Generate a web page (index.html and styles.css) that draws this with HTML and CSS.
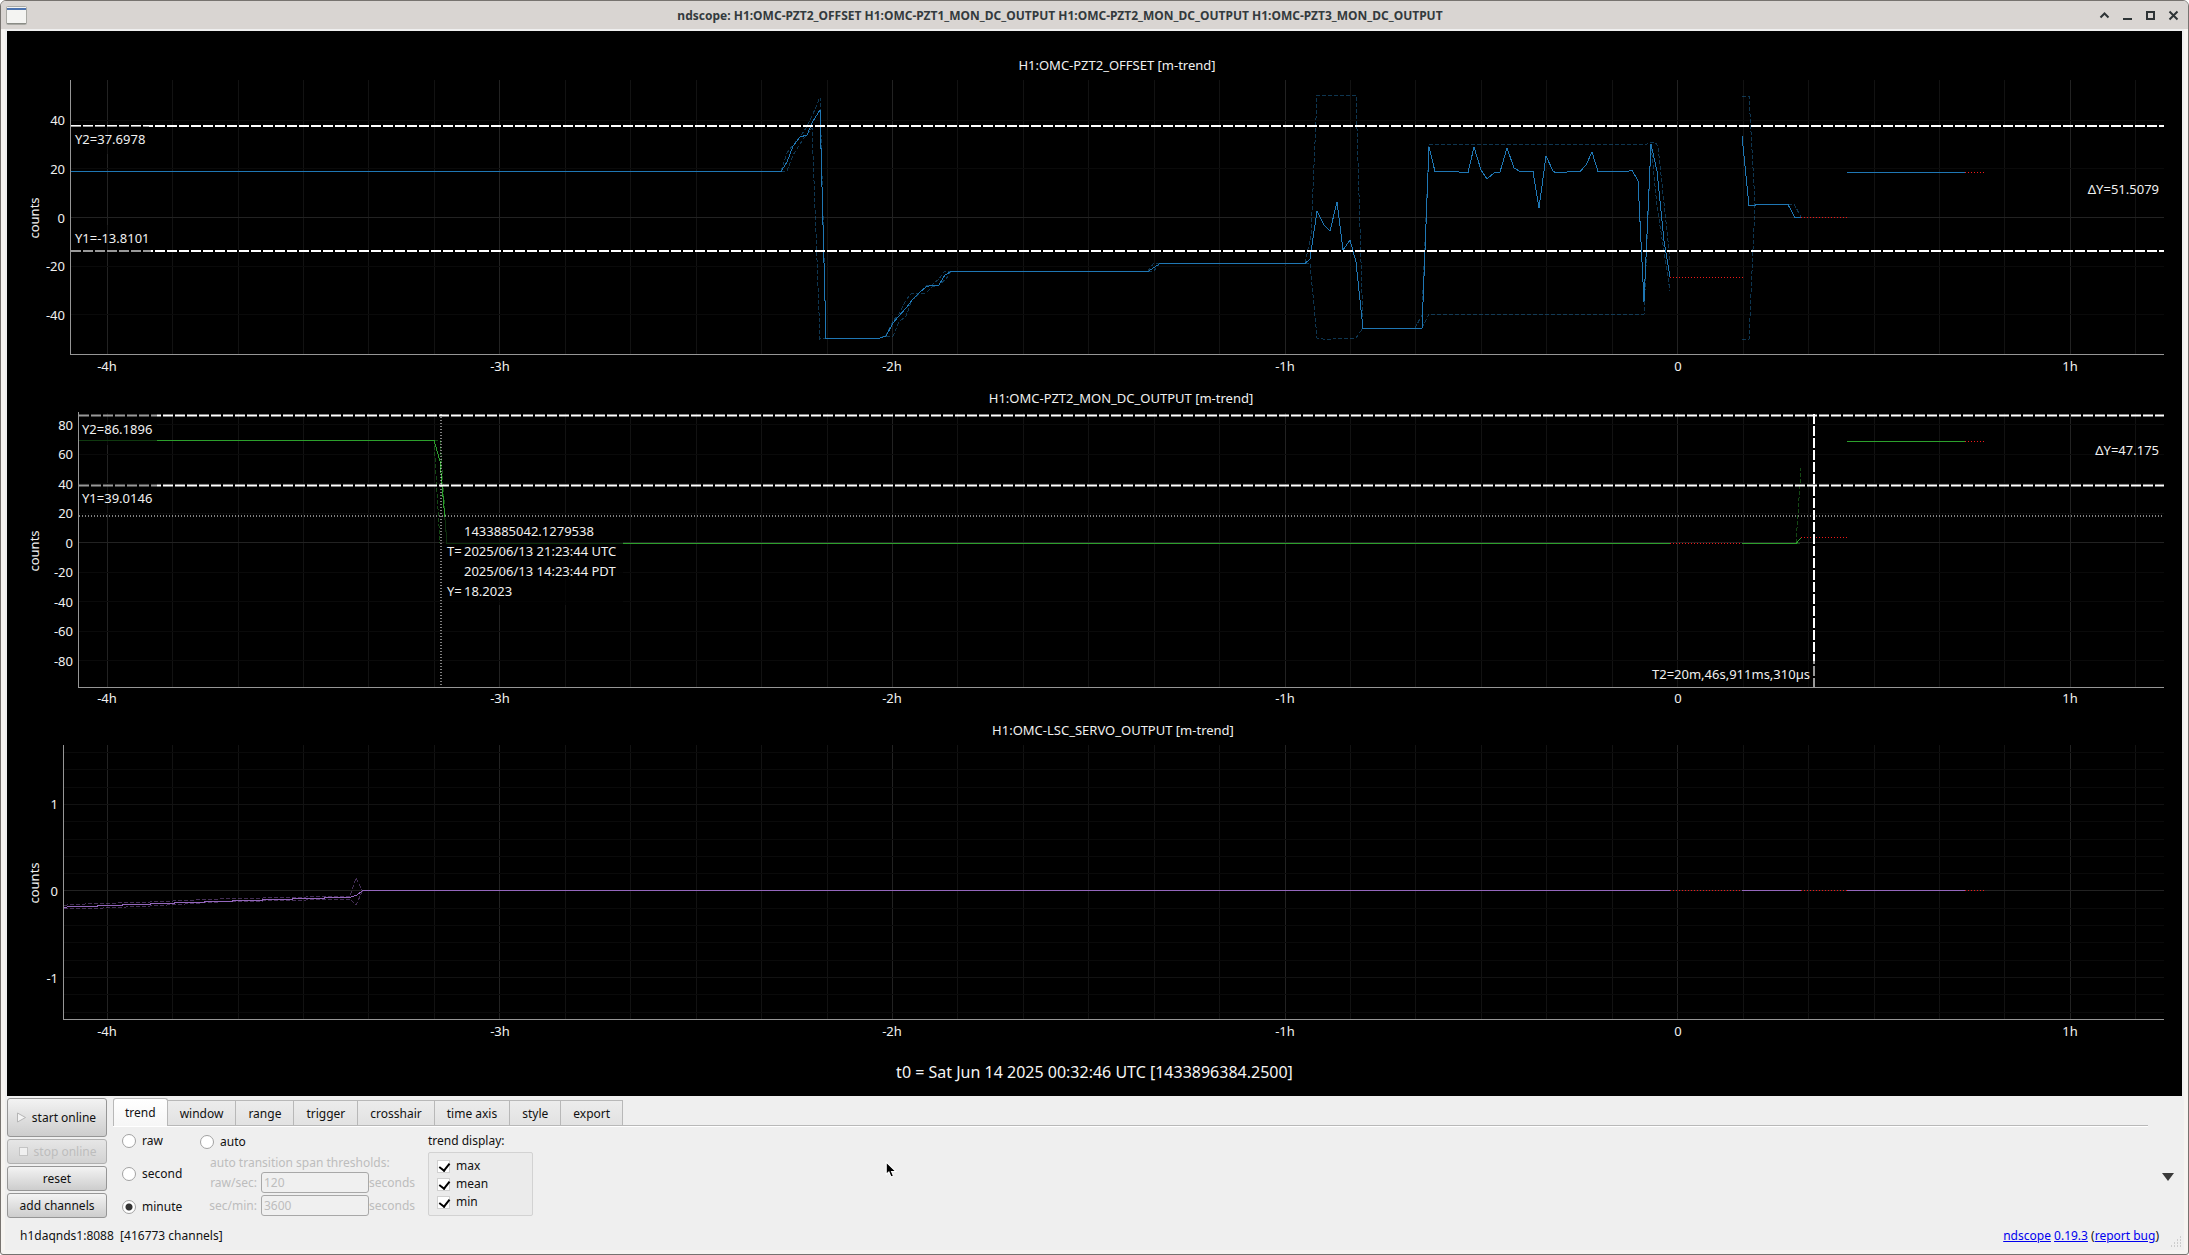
FILE: index.html
```
<!DOCTYPE html>
<html lang="en">
<head>
  <meta charset="utf-8" />
  <meta name="viewport" content="width=device-width, initial-scale=1" />
  <title>ndscope</title>
  <link rel="stylesheet" href="styles.css">
</head>
<body>

<div class="window">
  <header class="titlebar">
    <svg class="app-icon" width="21" height="19" viewBox="0 0 21 19" aria-hidden="true">
      <rect x="0.5" y="0.5" width="20" height="18" rx="1" fill="#f4f4f2" stroke="#a9a9a4" />
      <rect x="1" y="2" width="19" height="2" fill="#4d74b0" />
      <rect x="1" y="17" width="19" height="1" fill="#8a8c86" />
    </svg>
    <h1>ndscope: H1:OMC-PZT2_OFFSET H1:OMC-PZT1_MON_DC_OUTPUT H1:OMC-PZT2_MON_DC_OUTPUT H1:OMC-PZT3_MON_DC_OUTPUT</h1>
    <div class="window-buttons">
      <button type="button" aria-label="Roll up"><svg width="11" height="11" viewBox="0 0 11 11"><path d="M1.500 7.500L5.500 3.500L9.500 7.500" /></svg></button>
      <button type="button" aria-label="Minimize"><svg width="11" height="11" viewBox="0 0 11 11"><path d="M1 9H10" /></svg></button>
      <button type="button" aria-label="Maximize"><svg width="11" height="11" viewBox="0 0 11 11"><path d="M2 2H9V9H2Z" /></svg></button>
      <button type="button" aria-label="Close"><svg width="11" height="11" viewBox="0 0 11 11"><path d="M1.500 1.500L9.500 9.500M9.500 1.500L1.500 9.500" /></svg></button>
    </div>
  </header>

  <main class="plots">
    <!-- PZT2 offset -->
    <svg class="plot" viewBox="7 31 2175 352" role="img" aria-label="H1:OMC-PZT2_OFFSET trend">
      <defs>
        <path id="hours-minor" d="M172.500 80V354M238.500 80V354M303.500 80V354M368.500 80V354M434.500 80V354M565.500 80V354M630.500 80V354M696.500 80V354M761.500 80V354M827.500 80V354M957.500 80V354M1023.500 80V354M1088.500 80V354M1154.500 80V354M1219.500 80V354M1350.500 80V354M1415.500 80V354M1481.500 80V354M1546.500 80V354M1612.500 80V354M1743.500 80V354M1808.500 80V354M1874.500 80V354M1939.500 80V354M2004.500 80V354M2135.500 80V354" />
        <path id="hours" d="M107.500 80V354M499.500 80V354M892.500 80V354M1285.500 80V354M1677.500 80V354M2070.500 80V354" />
        <g id="hour-labels">
          <text x="107" y="371">-4h</text>
          <text x="500" y="371">-3h</text>
          <text x="892" y="371">-2h</text>
          <text x="1285" y="371">-1h</text>
          <text x="1678" y="371">0</text>
          <text x="2070" y="371">1h</text>
        </g>
      </defs>
      <text class="plot-title" x="1117" y="70">H1:OMC-PZT2_OFFSET [m-trend]</text>
      <text class="axis-name" transform="translate(39 218) rotate(-90)">counts</text>
      <use class="grid-minor" href="#hours-minor" />
      <use class="grid-major" href="#hours" />
      <path class="grid-faint" d="M71 120.500H2164M71 168.500H2164M71 266.500H2164M71 314.500H2164" />
      <path class="grid-major" d="M71 217.500H2164" />

      <g class="trace blue">
        <path class="band" d="M781 171L787 153L793 145L800 137L806 128L813 114L820 97L821 135L826 338M880 338L886 335L893 321L899 314L906 300L912 293H919L926 286L932 285L939 279L945 271H951M1148 271L1154 263H1160M1305 263L1311 236L1317 95H1356L1363 328M1415 328L1422 315L1429 144H1647L1649 142H1655L1658 146L1670 260M1742 96H1749L1755 204M1788 204H1794L1801 217" />
        <path class="band" d="M781 171H787L793 155L800 144L807 134L812 128L820 339L826 338M886 336H893L899 322L906 316L912 300L919 294L926 293L932 287L939 285L946 279L951 271M1148 271H1154L1160 263M1305 263H1310L1317 338L1323 339H1331L1334 338H1340L1344 339L1350 338H1356L1363 328M1422 328L1429 314H1644L1651 145L1657 206L1670 291M1742 339H1749L1755 204" />
        <path d="M71 171.500H781L787 162L793 146L800 137L807 135L813 121L820 110L826 338H880L886 336L893 323L899 316L906 308L913 299L919 293L926 287L932 285H939L945 275L951 271.500H1148L1160 263.500H1305L1310 259L1317 211L1324 225L1330 231L1337 202L1343 250L1350 240L1356 262L1363 328.500H1422L1429 147L1435 171.500H1458L1460 172.500H1468L1474 147L1481 170L1487 179L1494 173L1500 172L1507 148L1514 168L1520 171.500H1533L1539 208L1546 156L1553 171L1555 172.500H1566L1568 171.500H1580L1586 165L1592 152L1598 171.500H1628L1632 170L1638 181L1644 302L1651 144L1657 171L1664 241L1670 277M1742 136L1749 205.500H1755V204.500H1788L1795 217.500H1801M1847 172.500H1965" />
        <path class="gap" d="M1670 277.500H1743M1801 217.500H1847M1965 172.500H1984" />
      </g>

      <path class="cursor-line" d="M71 126H2164M71 251H2164" />
      <rect class="label-bg" x="71" y="126" width="78" height="28" />
      <rect class="label-bg" x="71" y="225" width="80" height="28" />
      <text x="75" y="144">Y2=37.6978</text>
      <text x="75" y="243">Y1=-13.8101</text>
      <text class="end" x="2159" y="194">ΔY=51.5079</text>

      <path class="axis" d="M70.500 80V354.500H2164" />
      <g class="end">
        <text x="65" y="125">40</text>
        <text x="65" y="174">20</text>
        <text x="65" y="223">0</text>
        <text x="65" y="271">-20</text>
        <text x="65" y="320">-40</text>
      </g>
      <use class="middle" href="#hour-labels" />
    </svg>

    <!-- PZT2 monitor -->
    <svg class="plot" viewBox="7 383 2175 333" role="img" aria-label="H1:OMC-PZT2_MON_DC_OUTPUT trend">
      <text class="plot-title" x="1121" y="403">H1:OMC-PZT2_MON_DC_OUTPUT [m-trend]</text>
      <text class="axis-name" transform="translate(39 551) rotate(-90)">counts</text>
      <use class="grid-minor" href="#hours-minor" y="333" />
      <use class="grid-major" href="#hours" y="333" />
      <path class="grid-faint" d="M79 424.500H2164M79 454.500H2164M79 483.500H2164M79 513.500H2164M79 572.500H2164M79 601.500H2164M79 631.500H2164M79 660.500H2164" />
      <path class="grid-major" d="M79 542.500H2164" />

      <g class="trace green">
        <path class="band" d="M434 440H440L447 543M434 440L440 543M1796 543L1801 468M1796 543.500H1801" />
        <path d="M79 440.500H434L440 461L447 543.500H1670M1742 543.500H1796L1801 538M1847 441.500H1965" />
        <path class="gap" d="M1670 543.500H1742M1801 537.500H1847M1965 441.500H1984" />
      </g>

      <rect class="label-bg" x="79" y="420" width="78" height="25" />
      <path class="crosshair" d="M79 516H2164M441 414V687" />
      <path class="cursor-line" d="M79 415.500H2164M79 485.500H2164M1814 414V687" />
      <rect class="label-bg" x="79" y="413" width="78" height="32" />
      <rect class="label-bg" x="79" y="483" width="78" height="31" />
      <rect class="label-bg" x="1648" y="661" width="167" height="27" />
      <rect class="label-bg dark" x="444" y="517" width="179" height="88" />
      <text x="82" y="434">Y2=86.1896</text>
      <text x="82" y="503">Y1=39.0146</text>
      <text class="end" x="2159" y="455">ΔY=47.175</text>
      <text class="end" x="1810" y="679">T2=20m,46s,911ms,310µs</text>
      <text x="464" y="536">1433885042.1279538</text>
      <text x="447" y="556">T=</text>
      <text x="464" y="556">2025/06/13 21:23:44 UTC</text>
      <text x="464" y="576">2025/06/13 14:23:44 PDT</text>
      <text x="447" y="596">Y=</text>
      <text x="464" y="596">18.2023</text>

      <path class="axis" d="M78.500 412V687.500H2164" />
      <g class="end">
        <text x="73" y="430">80</text>
        <text x="73" y="459">60</text>
        <text x="73" y="489">40</text>
        <text x="73" y="518">20</text>
        <text x="73" y="548">0</text>
        <text x="73" y="577">-20</text>
        <text x="73" y="607">-40</text>
        <text x="73" y="636">-60</text>
        <text x="73" y="666">-80</text>
      </g>
      <use class="middle" href="#hour-labels" y="332" />
    </svg>

    <!-- LSC servo -->
    <svg class="plot" viewBox="7 716 2175 332" role="img" aria-label="H1:OMC-LSC_SERVO_OUTPUT trend">
      <text class="plot-title" x="1113" y="735">H1:OMC-LSC_SERVO_OUTPUT [m-trend]</text>
      <text class="axis-name" transform="translate(39 883) rotate(-90)">counts</text>
      <use class="grid-minor" href="#hours-minor" y="665" />
      <use class="grid-major" href="#hours" y="665" />
      <path class="grid-faint" d="M64 752.500H2164M64 769.500H2164M64 787.500H2164M64 821.500H2164M64 839.500H2164M64 856.500H2164M64 873.500H2164M64 908.500H2164M64 925.500H2164M64 942.500H2164M64 960.500H2164M64 994.500H2164M64 1012.500H2164" />
      <path class="grid-minor" d="M64 804.500H2164M64 977.500H2164" />
      <path class="grid-major" d="M64 890.500H2164" />

      <g class="trace purple">
        <path class="band" d="M64 906L70 904H85L150 902L220 899L350 896L356 878L362 890" />
        <path class="band" d="M64 908L80 909L150 906L220 902L350 899L356 905L363 890" />
        <path d="M64 907.500L70 906.500H97V905.500H122V904.500H150V903.500H174V902.500H204V901.500H232V900.500H262V899.500H292V898.500H324V897.500H350L357 895L363 890.500H1670M1742 890.500H1801M1847 890.500H1965" />
        <path class="gap" d="M1670 890.500H1742M1801 890.500H1847M1965 890.500H1984" />
      </g>

      <path class="axis" d="M63.500 745V1019.500H2164" />
      <g class="end">
        <text x="58" y="809">1</text>
        <text x="58" y="896">0</text>
        <text x="58" y="983">-1</text>
      </g>
      <use class="middle" href="#hour-labels" y="665" />
    </svg>

    <p class="t0">t0 = Sat Jun 14 2025 00:32:46 UTC [1433896384.2500]</p>
  </main>

  <section class="controls">
    <div class="actions">
      <button type="button" class="start"><svg width="11" height="11" viewBox="0 0 11 11"><path d="M1.500 1L9.500 5.500L1.500 10Z" fill="#f4f4f4" stroke="#b5b5b5" /></svg>start online</button>
      <button type="button" disabled><svg width="11" height="11" viewBox="0 0 11 11"><rect x="1.500" y="1.500" width="8" height="8" fill="#f0f0f0" stroke="#c4c4c4" /></svg>stop online</button>
      <button type="button">reset</button>
      <button type="button">add channels</button>
    </div>

    <div class="settings">
      <div class="tabs" role="tablist">
        <button type="button" role="tab" aria-selected="true">trend</button>
        <button type="button" role="tab" aria-selected="false">window</button>
        <button type="button" role="tab" aria-selected="false">range</button>
        <button type="button" role="tab" aria-selected="false">trigger</button>
        <button type="button" role="tab" aria-selected="false">crosshair</button>
        <button type="button" role="tab" aria-selected="false">time axis</button>
        <button type="button" role="tab" aria-selected="false">style</button>
        <button type="button" role="tab" aria-selected="false">export</button>
      </div>
      <form class="trend-panel" role="tabpanel">
        <div class="rates">
          <label><input type="radio" name="rate">raw</label>
          <label><input type="radio" name="rate">second</label>
          <label><input type="radio" name="rate" checked>minute</label>
        </div>
        <div class="auto">
          <label class="auto-choice"><input type="radio" name="rate">auto</label>
          <p>auto transition span thresholds:</p>
          <div class="threshold">
            <label for="raw-sec">raw/sec:</label>
            <input type="text" id="raw-sec" value="120" disabled>
            <span>seconds</span>
          </div>
          <div class="threshold">
            <label for="sec-min">sec/min:</label>
            <input type="text" id="sec-min" value="3600" disabled>
            <span>seconds</span>
          </div>
        </div>
        <fieldset class="display">
          <legend>trend display:</legend>
          <div class="display-box">
            <label><input type="checkbox" checked>max</label>
            <label><input type="checkbox" checked>mean</label>
            <label><input type="checkbox" checked>min</label>
          </div>
        </fieldset>
      </form>
    </div>

    <button type="button" class="collapse" aria-label="Hide controls"><svg width="12" height="8" viewBox="0 0 12 8"><path d="M0 0H12L6 8Z" fill="#3a3a3a" /></svg></button>
  </section>

  <footer class="status">
    <span class="server">h1daqnds1:8088&nbsp; [416773 channels]</span>
    <span><a href="#ndscope">ndscope</a> <a href="#version">0.19.3</a> (<a href="#bug">report bug</a>)</span>
    <svg class="grip" width="11" height="11" viewBox="0 0 11 11" aria-hidden="true">
      <path d="M9 1h1M6 4h1M9 4h1M3 7h1M6 7h1M9 7h1M0 10h1M3 10h1M6 10h1M9 10h1" stroke="#aaa" />
    </svg>
  </footer>

  <svg class="pointer" width="12" height="17" viewBox="0 0 11 16" aria-hidden="true">
    <path d="M1 1V12.500L3.500 10.300L5.500 15L7.800 14L6 9.800H10Z" fill="#000" stroke="#fff" />
  </svg>
</div>

</body>
</html>
```
FILE: styles.css
```
* {
  box-sizing: border-box;
}

body {
  margin: 0;
  background-color: #fff;
  font-family: "Noto Sans", sans-serif;
  font-size: 12px;
  line-height: 18px;
  color: #111;
}

h1,
p {
  margin: 0;
}

button,
input {
  font: inherit;
  color: inherit;
}

.window {
  position: relative;
  display: flex;
  flex-direction: column;
  min-height: 100vh;
  border: 1px solid #77736f;
  border-radius: 6px 6px 3px 3px;
  background-color: #efefef;
  box-shadow: inset 0 0 0 4px #f6f4f1;
  overflow: hidden;
}

/* title bar */

.titlebar {
  display: flex;
  align-items: center;
  height: 28px;
  padding: 0 3px 0 5px;
  background-color: #d9d5d2;
}

.titlebar h1 {
  flex: 1;
  padding-top: 2px;
  font-size: 12px;
  font-weight: 700;
  text-align: center;
  color: #333a3d;
}

.window-buttons {
  display: flex;
}

.window-buttons button {
  display: flex;
  align-items: center;
  justify-content: center;
  width: 23px;
  height: 26px;
  padding: 0;
  border: none;
  background: none;
}

.window-buttons path {
  fill: none;
  stroke: #2e3436;
  stroke-width: 2;
}

/* plots */

.plots {
  margin: 2px 6px 0;
  background-color: #000;
}

.plot {
  display: block;
  width: 100%;
}

.plot text {
  font-size: 13px;
  fill: #f0f0f0;
}

.plot .plot-title,
.plot .axis-name,
.middle {
  text-anchor: middle;
}

.end {
  text-anchor: end;
}

.grid-major,
.grid-minor,
.grid-faint {
  fill: none;
  stroke: #222;
  shape-rendering: crispEdges;
}

.grid-minor {
  stroke: #121212;
}

.grid-faint {
  stroke: #0a0a0a;
}

.axis {
  fill: none;
  stroke: #969696;
  shape-rendering: crispEdges;
}

.trace path {
  fill: none;
  shape-rendering: crispEdges;
}

.blue {
  stroke: #1f77b4;
}

.green {
  stroke: #2ca02c;
}

.purple {
  stroke: #9467bd;
}

.trace .band {
  stroke-dasharray: 4 2;
  opacity: 0.45;
}

.trace .gap {
  stroke: #f01818;
  stroke-dasharray: 1 2;
}

.cursor-line {
  fill: none;
  stroke: #fff;
  stroke-width: 2;
  stroke-dasharray: 10 2;
}

.crosshair {
  fill: none;
  stroke: #fff;
  stroke-dasharray: 1 2;
}

.label-bg {
  fill: #000;
  opacity: 0.4;
}

.label-bg.dark {
  opacity: 0.7;
}

.t0 {
  font-size: 16px;
  line-height: 48px;
  text-align: center;
  color: #f4f4f4;
}

/* controls */

.controls {
  display: flex;
  gap: 6px;
  padding: 2px 6px 0;
}

.actions {
  display: flex;
  flex-direction: column;
  gap: 2px;
  width: 100px;
}

.actions button {
  display: flex;
  align-items: center;
  justify-content: center;
  gap: 5px;
  height: 25px;
  padding: 0;
  border: 1px solid #969696;
  border-radius: 3px;
  background: linear-gradient(#f3f3f3, #cdcdcd);
}

.actions button.start {
  height: 39px;
  padding-right: 2px;
}

.actions button:disabled {
  border-color: #b0b0b0;
  background: linear-gradient(#e6e6e6, #d2d2d2);
  color: #bdbdbd;
}

.settings {
  flex: 1;
}

.tabs {
  display: flex;
  align-items: flex-end;
  height: 29px;
  border-bottom: 1px solid #fff;
  box-shadow: inset 0 -1px #b8b8b8;
}

.tabs button {
  height: 26px;
  padding: 2px 12px 0;
  border: 1px solid #b8b8b8;
  border-left: none;
  background: linear-gradient(#ececec, #e2e2e2);
}

.tabs button[aria-selected="true"] {
  height: 28px;
  padding: 0 11px;
  border-left: 1px solid #b8b8b8;
  border-bottom: none;
  border-radius: 3px 3px 0 0;
  background: linear-gradient(#fff, #f6f6f6);
}

.trend-panel {
  display: flex;
  align-items: flex-start;
  padding: 4px 0 0 9px;
}

.trend-panel label {
  display: flex;
  align-items: center;
}

.trend-panel input[type="radio"] {
  appearance: none;
  width: 14px;
  height: 14px;
  margin: 0 6px 0 0;
  border: 1px solid #a2a2a2;
  border-radius: 50%;
  background-color: #fff;
}

.trend-panel input[type="radio"]:checked {
  background: radial-gradient(circle, #333 3px, #fff 4px);
}

.rates {
  display: flex;
  flex-direction: column;
  gap: 15px;
  width: 78px;
  padding-top: 1px;
}

.auto {
  width: 228px;
  color: #bdbdbd;
}

.auto-choice {
  height: 22px;
  color: #111;
}

.auto p {
  padding: 1px 0 0 10px;
}

.threshold {
  display: flex;
  align-items: center;
  margin-bottom: 2px;
}

.trend-panel .threshold label {
  justify-content: flex-end;
  width: 50px;
  margin: 0 4px 0 7px;
}

.threshold input {
  width: 108px;
  height: 21px;
  padding: 0 2px;
  border: 1px solid #a8a8a8;
  border-radius: 3px;
  background-color: #f0f0f0;
  color: #bdbdbd;
}

.display {
  margin: 0;
  padding: 0;
  border: none;
}

.display legend {
  padding: 0;
  line-height: 20px;
}

.display-box {
  width: 105px;
  margin-top: 1px;
  padding: 4px 8px;
  border: 1px solid #d2d2d2;
  border-radius: 2px;
  background-color: #ebebeb;
}

.display-box input {
  appearance: none;
  width: 13px;
  height: 13px;
  margin: 0 6px 0 0;
  border: 1px solid #d0d0d0;
  background: #fff;
}

.display-box input:checked::before {
  content: "";
  display: block;
  width: 5px;
  height: 8px;
  margin: 0 0 0 3px;
  border: solid #000;
  border-width: 0 2px 2px 0;
  transform: rotate(38deg);
}

.collapse {
  align-self: center;
  display: flex;
  margin: 38px 8px 0 8px;
  padding: 0;
  border: none;
  background: none;
}

/* status bar */

.status {
  display: flex;
  align-items: center;
  height: 34px;
  padding: 2px 6px 0 19px;
}

.server {
  flex: 1;
}

.status a {
  color: #0000ee;
}

.grip {
  align-self: flex-end;
  margin: 0 0 5px 12px;
}

.pointer {
  position: absolute;
  left: 884px;
  top: 1160px;
}
```
